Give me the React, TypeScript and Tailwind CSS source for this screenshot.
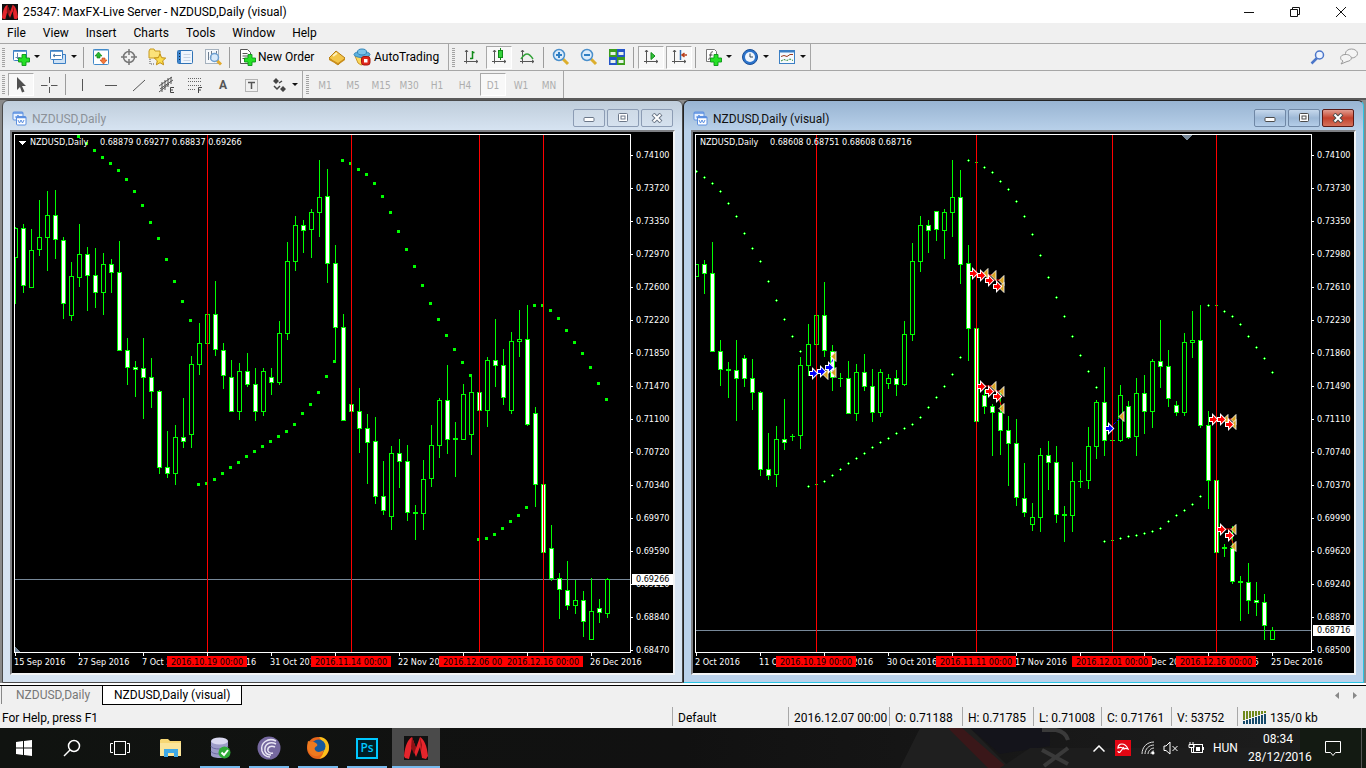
import type { ReactNode } from 'react'

// high, body top, body bottom, low, 1 = filled (bearish)
type Candle = [number, number, number, number, number]
// first x, then one y for every following bar
type Sar = [number, number[]]
type Mark = [number, number]

const BAR = 8
const TOP = 135

const LEFT_CANDLES: Candle[] = [
  [227, 228, 258, 304, 0], [224, 228, 286, 293, 1], [229, 250, 288, 288, 0], [200, 237, 250, 256, 0],
  [191, 215, 238, 271, 0], [190, 215, 240, 259, 1], [237, 240, 304, 319, 1], [262, 276, 316, 321, 0],
  [224, 254, 278, 287, 0], [247, 254, 276, 311, 1], [248, 275, 293, 308, 1], [253, 264, 293, 315, 0],
  [259, 264, 273, 293, 1], [241, 272, 351, 351, 1], [338, 350, 368, 385, 1], [361, 367, 370, 397, 1],
  [338, 368, 378, 419, 1], [358, 377, 392, 408, 1], [390, 391, 468, 474, 1], [431, 467, 474, 478, 1],
  [425, 437, 474, 485, 0], [398, 437, 442, 448, 1], [356, 364, 435, 448, 0], [323, 343, 365, 375, 0],
  [314, 314, 344, 344, 0], [281, 314, 350, 356, 1], [343, 350, 376, 389, 1], [360, 377, 412, 412, 1],
  [363, 371, 412, 420, 0], [353, 371, 385, 387, 1], [368, 384, 412, 421, 1], [368, 371, 412, 416, 0],
  [368, 377, 383, 395, 1], [321, 333, 383, 385, 0], [242, 261, 334, 340, 0], [216, 225, 262, 271, 0],
  [220, 225, 231, 253, 1], [209, 212, 230, 258, 0], [160, 197, 213, 237, 0], [169, 196, 264, 283, 1],
  [245, 263, 328, 360, 1], [314, 327, 421, 421, 1], [404, 404, 412, 412, 1], [388, 411, 429, 453, 1],
  [414, 428, 443, 484, 1], [417, 441, 497, 504, 1], [461, 496, 511, 515, 1], [446, 453, 517, 530, 0],
  [439, 453, 462, 488, 1], [445, 461, 513, 521, 1], [505, 512, 514, 540, 1], [460, 479, 514, 530, 0],
  [425, 445, 479, 487, 0], [398, 400, 446, 458, 0], [365, 400, 440, 454, 1], [422, 438, 440, 477, 1],
  [384, 394, 440, 440, 0], [376, 392, 435, 455, 0], [392, 392, 411, 411, 1], [357, 360, 411, 427, 0],
  [319, 360, 366, 387, 1], [349, 365, 398, 405, 1], [332, 341, 411, 414, 0], [310, 339, 342, 357, 0],
  [305, 339, 425, 426, 1], [407, 413, 485, 507, 1], [484, 484, 553, 553, 1], [525, 548, 579, 581, 1],
  [573, 578, 590, 619, 1], [561, 590, 606, 610, 1], [580, 600, 606, 614, 0], [591, 600, 622, 637, 1],
  [578, 611, 640, 640, 0], [599, 608, 613, 623, 1], [578, 579, 614, 618, 0],
]

const RIGHT_CANDLES: Candle[] = [
  [264, 264, 277, 277, 0], [260, 264, 274, 294, 1], [242, 273, 352, 352, 1], [340, 351, 370, 386, 1],
  [362, 369, 371, 398, 0], [340, 370, 379, 421, 1], [355, 358, 379, 387, 1], [359, 378, 393, 410, 1],
  [391, 392, 470, 476, 1], [433, 469, 476, 480, 1], [426, 439, 475, 487, 0], [399, 439, 443, 450, 1],
  [434, 436, 437, 441, 0], [357, 365, 436, 449, 0], [324, 344, 366, 376, 0], [315, 315, 345, 345, 0],
  [282, 315, 351, 357, 1], [345, 351, 378, 391, 1], [373, 378, 379, 387, 0], [361, 378, 414, 414, 1],
  [364, 372, 414, 421, 0], [354, 372, 387, 391, 1], [369, 386, 413, 422, 1], [369, 372, 413, 417, 0],
  [374, 378, 384, 389, 0], [370, 378, 385, 396, 1], [321, 334, 385, 386, 0], [243, 261, 335, 341, 0],
  [216, 225, 262, 272, 0], [220, 225, 231, 253, 1], [211, 211, 230, 241, 1], [209, 212, 231, 259, 0],
  [160, 197, 213, 237, 0], [170, 197, 265, 284, 1], [245, 263, 329, 361, 1], [328, 328, 422, 422, 1],
  [390, 395, 407, 414, 1], [404, 406, 413, 456, 1], [390, 412, 431, 455, 1], [416, 430, 444, 486, 1],
  [419, 443, 498, 506, 1], [463, 498, 513, 517, 1], [503, 517, 525, 531, 0], [448, 455, 518, 532, 0],
  [441, 455, 463, 490, 1], [446, 462, 515, 523, 1], [506, 514, 516, 542, 0], [462, 481, 516, 532, 0],
  [470, 481, 482, 488, 0], [427, 446, 481, 489, 0], [400, 402, 447, 459, 0], [367, 402, 441, 456, 1],
  [440, 440, 441, 441, 0], [385, 395, 441, 442, 0], [401, 406, 438, 439, 1], [378, 393, 437, 456, 0],
  [375, 393, 412, 434, 1], [359, 361, 412, 428, 0], [320, 361, 367, 388, 1], [350, 366, 399, 407, 1],
  [401, 405, 413, 416, 1], [333, 342, 413, 416, 0], [311, 340, 343, 358, 0], [305, 340, 426, 428, 1],
  [411, 425, 481, 509, 1], [480, 480, 553, 553, 1], [544, 547, 549, 557, 0], [526, 548, 582, 584, 1],
  [576, 581, 583, 621, 0], [563, 582, 601, 614, 1], [582, 600, 603, 616, 1], [594, 602, 626, 640, 1],
  [627, 630, 640, 640, 0],
]

const LEFT_SAR: Sar[] = [
  [63, [136, 143, 150, 157, 163, 170, 179, 191, 205, 222, 238, 259, 281, 301, 320]],
  [183, [484, 483, 479, 473, 467, 462, 456, 451, 446, 441, 436, 431, 424, 413, 404, 392, 376, 361]],
  [327, [160, 163, 169, 174, 183, 196, 212, 231, 249, 266, 285, 303, 319, 335, 349, 362, 375]],
  [463, [539, 538, 534, 528, 521, 515, 507]],
  [519, [305, 305, 310, 318, 330, 342, 353, 367, 383, 399]],
]

const RIGHT_SAR: Sar[] = [
  [0, [171, 177, 183, 191, 203, 216, 233, 248, 261, 281, 300, 319, 336, 351]],
  [112, [486, 484, 481, 475, 469, 463, 458, 453, 447, 442, 438, 433, 428, 424, 417, 407, 397, 386, 374, 357]],
  [272, [160, 162, 167, 172, 181, 189, 201, 216, 234, 255, 277, 297, 316, 336, 355, 371, 387]],
  [408, [541, 540, 538, 536, 535, 533, 531, 528, 521, 515, 510, 504, 496]],
  [512, [305, 305, 311, 316, 324, 336, 347, 358, 372]],
]

const SELLS: Mark[] = [
  [277, 273], [285, 275], [293, 280], [301, 286], [285, 386], [293, 391], [301, 396],
  [517, 419], [525, 419], [533, 424], [525, 529], [533, 535],
]
const BUYS: Mark[] = [[117, 373], [125, 371], [133, 367], [413, 428]]
const EXITS: Mark[] = [
  [290, 273], [298, 275], [306, 280], [306, 287], [298, 386], [306, 391], [306, 408],
  [138, 356], [130, 374], [138, 372], [426, 416], [530, 419], [538, 419], [538, 424], [538, 529], [538, 546],
]

const LEFT_PRICES = ['0.74100', '0.73720', '0.73350', '0.72970', '0.72600', '0.72220', '0.71850', '0.71470', '0.71100', '0.70720', '0.70340', '0.69970', '0.69590', '0.69220', '0.68840', '0.68470']
const RIGHT_PRICES = ['0.74100', '0.73730', '0.73350', '0.72980', '0.72610', '0.72230', '0.71860', '0.71490', '0.71110', '0.70740', '0.70370', '0.69990', '0.69620', '0.69240', '0.68870', '0.68500']
// an empty entry keeps its tick; the event label takes the place of the date
const LEFT_DATES = ['15 Sep 2016', '27 Sep 2016', '7 Oct 2016', '19 Oct 2016', '31 Oct 2016', '', '22 Nov 2016', '', '', '26 Dec 2016']
const RIGHT_DATES = ['2 Oct 2016', '11 Oct 2016', '20 Oct 2016', '30 Oct 2016', '', '17 Nov 2016', '', '6 Dec 2016', '15 Dec 2016', '25 Dec 2016']

function Arrow({ mark: [x, y], fill }: { mark: Mark; fill: string }) {
  return (
    <g transform={`translate(${x},${y + 0.5})`}>
      <path d="M-3-1.5H0V-4L4 0 0 4V1.5H-3z" fill="#fff" stroke="#fff" strokeWidth="2" />
      <path d="M-3-1.5H0V-4L4 0 0 4V1.5H-3z" fill={fill} />
    </g>
  )
}

interface ChartProps {
  candles: Candle[]
  sar: Sar[]
  prices: string[]
  dates: string[]
  events: { x: number; label: string }[]
  price: string
  priceY: number
  ohlc: string
  visual?: boolean
}

function Chart({ candles, sar, prices, dates, events, price, priceY, ohlc, visual }: ChartProps) {
  return (
    <div className="relative flex flex-1 overflow-hidden bg-black pt-[2px] pl-[2px] font-['DejaVu_Sans_Condensed','DejaVu_Sans',sans-serif] text-[9px] leading-[11px] text-white">
      <div className="flex min-w-0 flex-1 flex-col">
        <div className="relative min-h-0 flex-1 border border-white">
          <svg className="absolute inset-0 h-full w-full" shapeRendering="crispEdges">
            <rect x="0" y={priceY - TOP} width="100%" height="1" fill="#778899" />
            <g transform={`translate(0,${-TOP})`}>
              {candles.map(([high, top, bottom, low, filled], i) => (
                <g key={i}>
                  <rect x={i * BAR} y={high} width="1" height={Math.max(low - high, 1)} fill="#00ff00" />
                  <rect x={i * BAR - 2} y={top} width="5" height={bottom - top} fill="#00ff00" />
                  {bottom - top > 2 && (
                    <rect x={i * BAR - 1} y={top + 1} width="3" height={bottom - top - 2} fill={filled ? '#fff' : '#000'} />
                  )}
                </g>
              ))}
              {sar.map(([x, ys]) => ys.map((y, i) => visual ? (
                <g key={`${x}-${i}`} fill="#00ff00">
                  <rect x={x + i * BAR - 1} y={y} width="3" height="1" />
                  <rect x={x + i * BAR} y={y - 1} width="1" height="3" />
                  <rect x={x + i * BAR} y={y} width="1" height="1" fill="#c8ffc8" />
                </g>
              ) : (
                <rect key={`${x}-${i}`} x={x + i * BAR - 1} y={y - 1} width="3" height="3" fill="#00ff00" />
              )))}
            </g>
            {events.map((e) => <rect key={e.x} x={e.x} y="0" width="1" height="100%" fill="#f00" />)}
            {visual ? <path d="M485 0h11l-5 5h-1z" fill="#778899" /> : (
              <>
                <path d="M3 6h8l-4 4z" fill="#fff" />
                <path d="M0 512v5h5z" fill="#778899" />
              </>
            )}
            {visual && (
              <g transform={`translate(0,${-TOP})`} shapeRendering="auto">
                <path d="M286 275h12M294 280h12M286 386h12M294 391h12M302 396l4 12M518 419h20M526 529h12M534 535l4 11" stroke="#f00" />
                <path d="M118 373h12M126 371h12M134 367l4-11M414 428l12-12" stroke="#00f" strokeDasharray="3 2" />
                {EXITS.map(([x, y], i) => (
                  <path key={i} d="M-3 0L2-5V5z" transform={`translate(${x},${y + 0.5})`} fill="#daa520" stroke="#fff" strokeWidth="0.8" />
                ))}
                {SELLS.map((m, i) => <Arrow key={i} mark={m} fill="#f00" />)}
                {BUYS.map((m, i) => <Arrow key={i} mark={m} fill="#00f" />)}
              </g>
            )}
          </svg>
          <div className={`absolute top-[2px] flex whitespace-pre ${visual ? 'left-[4px]' : 'left-[15px]'}`}>
            <span className="w-[70px]">NZDUSD,Daily</span>
            <span>{ohlc}</span>
          </div>
        </div>
        <div className="relative h-[20px]">
          {dates.map((d, i) => (
            <span key={i} className="absolute top-0 border-l border-white whitespace-nowrap" style={{ left: 1 + i * 64, height: 3 }}>
              {d && <span className="absolute top-[4px] -left-[2px]">{d}</span>}
            </span>
          ))}
          {events.map((e) => (
            <span key={e.x} className="absolute top-[3px] h-[11px] w-[80px] bg-[#f00] text-center leading-[13px] text-black" style={{ left: e.x - 39 }}>
              {e.label}
            </span>
          ))}
        </div>
      </div>
      <div className="w-[42px] pt-[5px]">
        {prices.map((p) => (
          <div key={p} className="flex h-[33px] items-center gap-[3px]">
            <span className="h-px w-[2px] bg-white" />
            {p}
          </div>
        ))}
      </div>
      <span className="absolute right-0 w-[41px] bg-white pl-[4px] text-black" style={{ top: priceY - 137 }}>{price}</span>
    </div>
  )
}

function MdiIcon() {
  return (
    <svg width="15" height="15" viewBox="0 0 15 15" fill="none" stroke="#5b8fe0">
      <rect x="1" y="1" width="10" height="8" rx="1" fill="#e8f2ff" />
      <path d="M1 2h10" strokeWidth="1.500" />
      <path d="M3 6h2l1-2 1 3" />
      <rect x="4.500" y="5.500" width="9.500" height="8.500" rx="1" fill="#fff" />
      <path d="M4 6.500h10" strokeWidth="1.500" />
      <path d="M6 9l1.500 3L9 9l1.500 3L12 9" />
    </svg>
  )
}

function ChartWindow({ title, active, children }: { title: string; active?: boolean; children: ReactNode }) {
  const btn = active
    ? 'border-[#6f87a5] bg-gradient-to-b from-[#c6d8ec] via-[#9db8d6] to-[#b4cde8]'
    : 'border-[#8c9cb4] bg-gradient-to-b from-[#cedae6] to-[#d5e1ee]'
  const last = active ? 'border-[#5b1a16] bg-gradient-to-b from-[#e19b8f] via-[#c3402c] to-[#d3705a]' : btn
  const edge = active ? '#4b4b4b' : '#6b7788'
  return (
    <section
      className={`flex min-w-0 flex-1 flex-col rounded-t-md border px-[7px] pb-[7px] ${active
        ? 'border-[#222] border-r-[#2cc4e4] border-b-[#2cc4e4] bg-[#b9d1ea] bg-gradient-to-b from-[#98b4d2] to-[#b9d1ea] to-[30px]'
        : 'border-[#4a4a4a] bg-[#d7e4f2] bg-gradient-to-b from-[#bfcddb] to-[#d7e4f2] to-[30px]'}`}
    >
      <header className="flex h-[29px] items-center pt-[5px] pl-[2px]">
        <MdiIcon />
        <h2 className={`ml-[5px] flex-1 pt-[2px] text-[12px] ${active ? 'text-[#111]' : 'text-[#8c9299]'}`}>{title}</h2>
        <div className="flex gap-[2px] pr-[2px]">
          <button aria-label="Minimize" className={`flex h-[18px] w-[32px] items-center justify-center rounded-[2px] border ${btn}`}>
            <svg width="12" height="10"><rect x="1" y="4.500" width="10" height="4" rx="1" fill="#fff" stroke={edge} /></svg>
          </button>
          <button aria-label="Restore" className={`flex h-[18px] w-[32px] items-center justify-center rounded-[2px] border ${btn}`}>
            <svg width="12" height="10"><rect x="1.500" y="0.500" width="9" height="8" rx="1" fill="#fff" stroke={edge} /><rect x="4" y="3" width="4" height="3" fill="none" stroke={edge} /></svg>
          </button>
          <button aria-label="Close" className={`flex h-[18px] w-[32px] items-center justify-center rounded-[2px] border ${last}`}>
            <svg width="12" height="10"><path d="M2 1l8 8M10 1L2 9" stroke={edge} strokeWidth="4" /><path d="M2.500 1.500l7 7M9.500 1.500l-7 7" stroke="#fff" strokeWidth="2" /></svg>
          </button>
        </div>
      </header>
      <div className="flex min-h-0 flex-1 border-2 border-[#7d7f83] border-r-[#f2f4f6] border-b-[#f2f4f6]">{children}</div>
    </section>
  )
}

const Grip = () => <span className="mx-[2px] h-[19px] w-[3px] bg-[repeating-linear-gradient(#a2a2a2_0_1px,#f0f0f0_1px_2px)]" />
const Sep = () => <span className="mr-[3px] ml-[2px] h-[21px] w-px bg-[#9c9c9c]" />
const Caret = () => <svg width="6" height="4"><path d="M0 0h6L3 3z" fill="#111" /></svg>

function Tool({ label, on, wide, children }: { label: string; on?: boolean; wide?: boolean; children: ReactNode }) {
  return (
    <button
      aria-label={label}
      className={`flex h-[23px] items-center justify-center gap-[4px] ${wide ? 'w-[37px]' : on ? 'mx-px w-[26px]' : 'w-[28px]'} ${on ? 'border border-[#a8a8a8] border-r-white border-b-white bg-[#f8f8f8]' : ''}`}
    >
      {children}
    </button>
  )
}

const Ico = ({ children }: { children: ReactNode }) => (
  <svg width="18" height="18" viewBox="0 0 18 18" fill="none" className="shrink-0">{children}</svg>
)

const plus = <path d="M10 6.500h4v3.500h3.500v4H14v3.500h-4V14H6.500v-4H10z" fill="#25e025" stroke="#0a9416" strokeWidth=".9" />
const axes = <path d="M4.500 2v13.500M2 13.500h14M3 4l1.500-2L6 4M14 12l2 1.500-2 1.500" stroke="#555" />

function LogoM({ size }: { size: number }) {
  return (
    <svg width={size} height={size} viewBox="0 0 24 24">
      <rect width="24" height="24" fill="#111" />
      <path d="M0 20C1 10 4 3 8 1l4 11 4-11c4 2 7 9 8 19l-2 3-4-1-2-11-4 10-4-10-3 12-4-1z" fill="#e5252c" />
      <path d="M8 1l4 11-2 6-3-7zM16 1l2 8-1 6z" fill="#8c1115" />
    </svg>
  )
}

function MainToolbar() {
  return (
    <div className="flex h-[27px] items-center border-b border-[#a6a6a6]">
      <div className="flex h-full items-center border-r border-[#a6a6a6]">
        <Grip />
        <Tool label="New chart" wide>
          <Ico><rect x="1.500" y="2.500" width="13" height="10" rx="1" fill="#fff" stroke="#3b7fc4" /><path d="M1 3h14" stroke="#3b7fc4" strokeWidth="1.500" /><path d="M5.500 5v6M3.500 9.500h5" stroke="#6b8cae" />{plus}</Ico>
          <Caret />
        </Tool>
        <Tool label="Profiles" wide>
          <Ico><path d="M4.500 9v6.500h12V6.500h-3" fill="#cfe2f5" stroke="#3b7fc4" /><rect x="1.500" y="2.500" width="12" height="9" rx="1" fill="#fff" stroke="#3b7fc4" /><path d="M1 3h13" stroke="#3b7fc4" strokeWidth="1.500" /><path d="M4 7.500h8M6 6l-2 1.500L6 9" stroke="#4c79a8" /></Ico>
          <Caret />
        </Tool>
        <Sep />
        <Tool label="Market Watch">
          <Ico><rect x="1.500" y="1.500" width="15" height="15" rx="1" fill="#fff" stroke="#4189c9" /><path d="M1 2h16" stroke="#4189c9" /><path d="M3 8l3.500-4L10 8H8v2H5V8z" fill="#29b82f" stroke="#0b7a14" strokeWidth=".6" /><path d="M8 12l3.500 4 3.500-4h-2v-2h-3v2z" fill="#f47b3c" stroke="#c3400e" strokeWidth=".6" /></Ico>
        </Tool>
        <Tool label="Data Window">
          <Ico><circle cx="9" cy="9" r="5.500" stroke="#777" strokeWidth="1.500" /><path d="M9 1v6M9 11v6M1 9h6M11 9h6" stroke="#777" strokeWidth="1.500" /></Ico>
        </Tool>
        <Tool label="Navigator">
          <Ico><path d="M1 3l1-2h4l1 2h5v7H1z" fill="#fbe27a" stroke="#c79a1e" /><path d="M2 11v5h4" stroke="#555" strokeDasharray="1 1" /><path d="M12 6l1.700 3.700 4 .4-3 2.700.9 4L12 14.700l-3.600 2.100.9-4-3-2.700 4-.4z" fill="#fbdc4c" stroke="#c18e10" /></Ico>
        </Tool>
        <Tool label="Terminal">
          <Ico><rect x="1.500" y="2.500" width="15" height="13" rx="1" fill="#eef5fd" stroke="#2f72b5" /><rect x="2" y="3" width="3" height="12" fill="#3f86cf" /><path d="M3 5.500h1M3 8.500h1M3 11.500h1" stroke="#123" /><path d="M7.500 6.500h7M7.500 9.500h7M7.500 12.500h7" stroke="#c7d3e2" /></Ico>
        </Tool>
        <Tool label="Strategy Tester">
          <Ico><rect x="1.500" y="1.500" width="13" height="14" fill="#f5f8fb" stroke="#a5b1bd" /><path d="M4.500 4v8M7.500 3v7M12.500 3v4" stroke="#6c7c8e" /><path d="M13 12.500l4 4" stroke="#e2a92c" strokeWidth="3" /><circle cx="10.500" cy="9.500" r="4" fill="#cfe5fa" fillOpacity=".8" stroke="#6d9fd0" strokeWidth="1.500" /></Ico>
        </Tool>
        <Sep />
        <button className="flex h-[23px] w-[90px] items-center gap-[2px] pl-[5px] text-[12px] whitespace-nowrap">
          <Ico><path d="M2.500 1.500h7l3 3v11h-10z" fill="#fff" stroke="#555" /><path d="M4.500 5.500h5M4.500 8h6M4.500 10.500h4" stroke="#555" />{plus}</Ico>
          New Order
        </button>
        <Tool label="MetaEditor">
          <Ico><path d="M1 10l7-7 9 7-7 7z" fill="#f3c64a" stroke="#b47a12" /><path d="M1 10l9 5 7-5v2l-7 5-9-5z" fill="#c98e1c" /><path d="M5 8l4-3" stroke="#fdf0b8" strokeWidth="2" /></Ico>
        </Tool>
        <button className="flex h-[23px] w-[97px] items-center gap-[3px] pl-[2px] text-[12px] whitespace-nowrap">
          <Ico><path d="M2 8h14l-4 8-4 1-3-2z" fill="#fbd75c" stroke="#c9972a" /><ellipse cx="9" cy="6.500" rx="8" ry="3" fill="#5db1df" stroke="#3386b8" /><ellipse cx="9" cy="4" rx="4.500" ry="3" fill="#7cc4ea" stroke="#3386b8" /><rect x="8.500" y="8.500" width="8.500" height="8.500" rx="2.500" fill="#e0281c" stroke="#a5140c" /><rect x="11" y="11" width="3.500" height="3.500" fill="#fff" /></Ico>
          AutoTrading
        </button>
      </div>
      <div className="flex h-full items-center border-r border-[#a6a6a6] pl-px">
        <Grip />
        <Tool label="Bar Chart"><Ico>{axes}<path d="M10.500 3v8M10.500 4.500h2M8 10.500h2.500" stroke="#118a18" strokeWidth="1.500" /></Ico></Tool>
        <Tool label="Candlesticks" on><Ico>{axes}<path d="M10.500 0v12" stroke="#118a18" /><rect x="8.500" y="2.500" width="4" height="7" fill="#34d23b" stroke="#118a18" /></Ico></Tool>
        <Tool label="Line Chart"><Ico>{axes}<path d="M3 11c2-3 4-5 6-5s4 2 6 5" stroke="#32a238" strokeWidth="1.500" /></Ico></Tool>
        <Sep />
        <Tool label="Zoom In"><Ico><path d="M11 11l5 5" stroke="#dcae2c" strokeWidth="3" /><circle cx="7" cy="7" r="5.500" fill="#dcecfb" stroke="#4a8fcb" strokeWidth="1.500" /><path d="M7 4v6M4 7h6" stroke="#2f7fc4" strokeWidth="2" /></Ico></Tool>
        <Tool label="Zoom Out"><Ico><path d="M11 11l5 5" stroke="#dcae2c" strokeWidth="3" /><circle cx="7" cy="7" r="5.500" fill="#dcecfb" stroke="#4a8fcb" strokeWidth="1.500" /><path d="M4 7h6" stroke="#2f7fc4" strokeWidth="2" /></Ico></Tool>
        <Tool label="Tile Windows"><Ico>
          <rect x="1" y="1" width="8" height="8" fill="#3b9d1e" /><rect x="9" y="1" width="8" height="8" fill="#2455c8" />
          <rect x="1" y="9" width="8" height="8" fill="#2455c8" /><rect x="9" y="9" width="8" height="8" fill="#3b9d1e" />
          <path d="M2.500 5.500h5M10.500 5.500h5M2.500 13.500h5M10.500 13.500h5" stroke="#e8f1e8" strokeWidth="3" />
        </Ico></Tool>
        <Sep />
        <Tool label="Auto Scroll" on><Ico>{axes}<path d="M9 4.500l4 3.500-4 3.500z" fill="#2fc437" stroke="#118a18" /></Ico></Tool>
        <Tool label="Chart Shift" on><Ico>{axes}<path d="M10.500 2v10" stroke="#2f6db5" strokeWidth="1.500" /><path d="M17 7h-4M14.500 5l-2.500 2 2.500 2" stroke="#b8401c" strokeWidth="1.500" /></Ico></Tool>
        <Sep />
        <Tool label="Indicators" wide><Ico><path d="M2.500 1.500h8l2 2v10h-10z" fill="#fff" stroke="#777" /><path d="M9 4c-2-1-2 1-2.500 3.500S6 12 4 11M5 7h3.500" stroke="#444" />{plus}</Ico><Caret /></Tool>
        <Tool label="Periods" wide><Ico><circle cx="9" cy="9" r="7.500" fill="#2c74cc" stroke="#1a4f97" /><circle cx="9" cy="9" r="5" fill="#f0f6fd" /><path d="M9 5.500V9h3" stroke="#345" /></Ico><Caret /></Tool>
        <Tool label="Templates" wide><Ico><rect x="1.500" y="2.500" width="15" height="13" fill="#f7fafd" stroke="#3b7fc4" /><path d="M1 3.500h16" stroke="#3b7fc4" strokeWidth="2" /><path d="M3 8.500l3-1 3 1 3-2 3 0" stroke="#9c3a1e" /><path d="M3 13l3-1.500 3 1 3-1.500 3 1.500" stroke="#2d8a35" strokeDasharray="2 1" /></Ico><Caret /></Tool>
      </div>
      <div className="ml-auto flex items-center gap-[13px] pr-[7px]">
        <button aria-label="Search">
          <svg width="16" height="16" fill="none" stroke="#4b76c9"><path d="M1.500 14.500L7 9" strokeWidth="2.500" /><circle cx="9.500" cy="6" r="4" fill="#eef4ff" strokeWidth="1.500" /></svg>
        </button>
        <button aria-label="Chat">
          <svg width="20" height="18" fill="#f4f4f4" stroke="#999"><ellipse cx="12.500" cy="5.500" rx="6" ry="4.500" /><path d="M2 16l2-3c-3-1-4-6 2-6.500 7-.5 9 6 2 7z" /></svg>
        </button>
      </div>
    </div>
  )
}

function LineToolbar() {
  return (
    <div className="flex h-[27px] items-center">
      <div className="flex h-full items-center border-r border-[#a6a6a6]">
        <Grip />
        <Tool label="Cursor" on><Ico><path d="M5 1v13l3-3 2 5.500 2.500-1L10 10h4z" fill="#505050" /></Ico></Tool>
        <Tool label="Crosshair"><Ico><path d="M9.500 1v6M9.500 11v6M1 9.500h6.500M11 9.500h6.500" stroke="#555" /></Ico></Tool>
        <Sep />
        <Tool label="Vertical Line"><Ico><path d="M8.500 3v12" stroke="#555" /></Ico></Tool>
        <Tool label="Horizontal Line"><Ico><path d="M3 9.500h12" stroke="#555" /></Ico></Tool>
        <Tool label="Trendline"><Ico><path d="M3 15L15 4" stroke="#555" /></Ico></Tool>
        <Tool label="Equidistant Channel"><Ico><path d="M1 10L14 1M1 16L11 8M4 6v10M7 4v10M10 2v9M13 1v7M2 13L15 4" stroke="#555" /><path d="M16 11.500h-3.500v5H16M12.500 14H15" stroke="#444" /></Ico></Tool>
        <Tool label="Fibonacci"><Ico><path d="M2 2.500h14M2 5.500h14M2 9.500h14M2 13.500h8" stroke="#666" strokeDasharray="1 1" /><path d="M16 11.500h-3.500V17M12.500 14H15" stroke="#444" /></Ico></Tool>
        <Tool label="Text"><span className="text-[12px] font-bold text-[#555]">A</span></Tool>
        <Tool label="Text Label"><Ico><rect x="3.500" y="3.500" width="12" height="12" stroke="#777" strokeDasharray="1 1" /><path d="M6 6.500h7M9.500 6v7" stroke="#555" strokeWidth="1.500" /></Ico></Tool>
        <Tool label="Arrows" wide><Ico><path d="M3 5l3-3 3 3-3 3zM10 13l3-3 3 3-3 3z" fill="#444" /><path d="M4 10l3 3 3-3M9 7l3-2" stroke="#444" strokeWidth="1.500" /></Ico><Caret /></Tool>
      </div>
      <div className="flex h-full items-center border-r border-[#a6a6a6] pl-px">
        <Grip />
        {['M1', 'M5', 'M15', 'M30', 'H1', 'H4', 'D1', 'W1', 'MN'].map((p) => (
          <Tool key={p} label={p} on={p === 'D1'}>
            <span className="pt-px font-['DejaVu_Sans_Condensed','DejaVu_Sans',sans-serif] text-[10px] text-[#adadad]">{p}</span>
          </Tool>
        ))}
      </div>
    </div>
  )
}

function StatusBar() {
  const cell = 'flex h-[19px] items-center border-l border-[#a8a8a8] pl-[5px] pt-[2px]'
  return (
    <footer className="flex h-[23px] items-center bg-[#f0f0f0] text-[12px] whitespace-nowrap">
      <span className="flex-1 pt-[2px] pl-[2px]">For Help, press F1</span>
      <span className={`${cell} w-[116px]`}>Default</span>
      <span className={`${cell} w-[101px]`}>2016.12.07 00:00</span>
      <span className={`${cell} w-[73px]`}>O: 0.71188</span>
      <span className={`${cell} w-[71px]`}>H: 0.71785</span>
      <span className={`${cell} w-[68px]`}>L: 0.71008</span>
      <span className={`${cell} w-[70px]`}>C: 0.71761</span>
      <span className={`${cell} w-[66px]`}>V: 53752</span>
      <span className={`${cell} w-[129px] gap-[4px]`}>
        <svg width="23" height="13">
          {[0, 1, 2, 3, 4, 5, 6, 7].map((i) => (
            <g key={i}>
              <rect x={i * 3} y="0" width="2" height={9 - i} fill="#6f8a1c" />
              <rect x={i * 3} y={10 - i} width="2" height={3 + i} fill="#164a6b" />
            </g>
          ))}
        </svg>
        135/0 kb
      </span>
    </footer>
  )
}

function TaskButton({ label, open, active, children }: { label: string; open?: boolean; active?: boolean; children: ReactNode }) {
  return (
    <button aria-label={label} className={`relative flex h-[40px] w-[48px] items-center justify-center ${active ? 'bg-[#4a4a4a]' : ''}`}>
      {children}
      {(open || active) && <span className={`absolute bottom-0 h-[2px] bg-[#76b9ed] ${active ? 'w-[48px]' : 'w-[40px]'}`} />}
    </button>
  )
}

function Taskbar() {
  return (
    <nav className="relative flex h-[40px] items-center bg-gradient-to-r from-[#101310] via-[#111] to-[#1e1e1e] text-white">
      {/* wallpaper showing through the bar */}
      <svg className="absolute top-0 right-0" width="466" height="40">
        <path d="M20 0h50l40 40H0z" fill="#1f1f1f" />
        <path d="M48 0l14 0 46 40h-20z" fill="#3a1719" />
        <path d="M70 0h80v18l-50 8z" fill="#14141b" />
        <path d="M100 40l30-20h250v20z" fill="#1d1d1d" />
        <path d="M142 2h14q10 2 12 10M142 22l26 14M168 20l-24 18" fill="none" stroke="#3a3a3a" strokeWidth="4" />
        <rect x="400" width="66" height="40" fill="#131a12" />
        <path d="M461.500 0v40" stroke="#555" />
      </svg>
      <TaskButton label="Start"><svg width="16" height="16" fill="#fff"><path d="M0 2l7-1v6.500H0zM8 1l8-1v7.500H8zM0 8.500h7V15l-7-1zM8 8.500h8V16l-8-1z" /></svg></TaskButton>
      <TaskButton label="Search"><svg width="18" height="18" fill="none" stroke="#fff" strokeWidth="1.500"><circle cx="11" cy="7" r="5.500" /><path d="M7 11l-6 6" /></svg></TaskButton>
      <TaskButton label="Task View"><svg width="20" height="16" fill="none" stroke="#fff"><rect x="4.500" y="1.500" width="11" height="13" /><path d="M3 3.500H.5v9H3M17 3.500h2.500v9H17" /></svg></TaskButton>
      <div className="mr-px ml-[3px] flex gap-px">
        <TaskButton label="File Explorer"><svg width="22" height="20"><path d="M0 2l1-1h7l2 2h11v15H0z" fill="#f7d774" /><path d="M0 5h21v13H0z" fill="#fbe59a" /><path d="M4 19v-8h14v8h-4v-4H8v4z" fill="#3fa9e6" /></svg></TaskButton>
        <TaskButton label="Database" open><svg width="21" height="22"><path d="M1 4v14c0 4 17 4 17 0V4z" fill="#9d9cc8" /><ellipse cx="9.500" cy="4" rx="8.500" ry="3.500" fill="#d9d8ef" /><path d="M1 9c0 4 17 4 17 0M1 14c0 4 17 4 17 0" fill="none" stroke="#6e6da3" /><circle cx="14.500" cy="15.500" r="6" fill="#2faa37" /><path d="M11.500 15.500l2.500 2.500 4-5" fill="none" stroke="#fff" strokeWidth="2" /></svg></TaskButton>
        <TaskButton label="BitTorrent" open><svg width="24" height="24" fill="none" stroke="#e9e6f4" strokeWidth="1.500"><circle cx="12" cy="12" r="11.500" fill="#75689f" stroke="none" /><path d="M19 5C11 1 3 7 5 15c1 3 4 6 8 6M19 8c-6-3-12 0-11 7 1 3 3 4 6 4M18 11c-4-2-8 0-7 4 1 2 2 3 5 2" /></svg></TaskButton>
        <TaskButton label="Firefox" open><svg width="24" height="24"><circle cx="12" cy="12" r="11" fill="#e8661b" /><path d="M13 1c8 0 12 8 9 15-2 4-5 6-9 7 6-5 7-14 0-22z" fill="#fcc21b" /><circle cx="12.500" cy="10.500" r="7" fill="#17599c" /><path d="M2 5c2 1 4 1 6 1 3 1 4 3 3 4-2 1-3 2-2 4 2 3 6 2 9 0-2 6-9 8-13 4C1 15 1 9 2 5z" fill="#ee7a1f" /></svg></TaskButton>
        <TaskButton label="Photoshop" open><span className="flex h-[21px] w-[22px] items-center justify-center border-2 border-[#00c8ff] bg-[#001d26] font-['Open_Sans',sans-serif] text-[12px] leading-none font-semibold text-[#00c8ff]">Ps</span></TaskButton>
      </div>
      <TaskButton label="MetaTrader" active><LogoM size={24} /></TaskButton>
      <div className="relative ml-auto flex h-full items-center">
        <svg width="12" height="7" fill="none" stroke="#fff" strokeWidth="1.500" className="mr-[10px]"><path d="M.5 6.500L6 1l5.500 5.500" /></svg>
        <svg width="16" height="16" fill="none" stroke="#fff" className="mr-[10px]"><rect width="16" height="16" fill="#e30613" stroke="none" /><path d="M3 8c0-5 7-6 10 1-2-1-3-1-4 0-2-2-4-2-6-1zM9 7l-4 5c-1 1-2 0-2-1" strokeWidth="1.200" /></svg>
        <svg width="14" height="14" fill="none" stroke="#ddd" className="mr-[8px]"><path d="M1 13C1 6 6 1 13 1M4 13c0-5 4-9 9-9M7 13c0-3 3-6 6-6M10 13c0-2 1-3 3-3" /><circle cx="12" cy="12" r="1.500" fill="#fff" stroke="none" /></svg>
        <svg width="16" height="14" fill="none" stroke="#fff" className="mr-[9px]"><path d="M1 5h2l4-4v12L3 9.500H1zM9.500 5l5 5M14.500 5l-5 5" /></svg>
        <svg width="17" height="12" fill="none" stroke="#fff" className="mr-[8px]"><rect x="5.500" y="2.500" width="9" height="8" /><path d="M15.500 5v3M2 0v2M5 0v2M1 2.500h5v3H1zM3.500 6v4.500h2" /><rect x="8" y="5" width="4" height="4" fill="#fff" stroke="none" /></svg>
        <span className="w-[35px] text-[12px]">HUN</span>
        <time className="w-[60px] text-center text-[12px] leading-[18px]">08:34<br />28/12/2016</time>
        <button aria-label="Notifications" className="mr-[24px] ml-[17px]">
          <svg width="17" height="17" fill="none" stroke="#fff"><path d="M.5 1.500h15v11h-5l-2.500 3-2.500-3h-5z" /></svg>
        </button>
      </div>
    </nav>
  )
}

export default function App() {
  return (
    <div className="flex min-h-screen flex-col bg-[#f0f0f0] font-[Roboto,'Open_Sans',sans-serif] text-black">
      <header className="flex h-[23px] items-center bg-white pl-[2px] text-[12px]">
        <LogoM size={16} />
        <h1 className="ml-[5px] flex-1">25347: MaxFX-Live Server - NZDUSD,Daily (visual)</h1>
        <div className="flex items-center gap-[36px] pr-[20px]">
          <button aria-label="Minimize"><svg width="10" height="10"><path d="M0 5.500h10" stroke="#111" /></svg></button>
          <button aria-label="Restore"><svg width="10" height="10" fill="none" stroke="#111"><path d="M.5 2.500h7v7h-7zM2.500 2V.5h7v7H8" /></svg></button>
          <button aria-label="Close"><svg width="10" height="10"><path d="M0 0l10 10M10 0L0 10" stroke="#111" /></svg></button>
        </div>
      </header>
      <nav className="flex h-[21px] items-center gap-[17px] border-b border-[#a6a6a6] pl-[7px] text-[12px]">
        {['File', 'View', 'Insert', 'Charts', 'Tools', 'Window', 'Help'].map((m) => <button key={m}>{m}</button>)}
      </nav>
      <MainToolbar />
      <LineToolbar />
      <main className="flex min-h-[580px] flex-1 border-t-2 border-b-2 border-t-[#5a5a5a] border-b-white bg-[#8a8a8a] px-[2px]">
        <ChartWindow title="NZDUSD,Daily">
          <Chart
            candles={LEFT_CANDLES}
            sar={LEFT_SAR}
            prices={LEFT_PRICES}
            dates={LEFT_DATES}
            events={[
              { x: 192, label: '2016.10.19 00:00' },
              { x: 336, label: '2016.11.14 00:00' },
              { x: 464, label: '2016.12.06 00:00' },
              { x: 528, label: '2016.12.16 00:00' },
            ]}
            price="0.69266"
            priceY={579}
            ohlc="0.68879 0.69277 0.68837 0.69266"
          />
        </ChartWindow>
        <ChartWindow title="NZDUSD,Daily (visual)" active>
          <Chart
            visual
            candles={RIGHT_CANDLES}
            sar={RIGHT_SAR}
            prices={RIGHT_PRICES}
            dates={RIGHT_DATES}
            events={[
              { x: 120, label: '2016.10.19 00:00' },
              { x: 280, label: '2016.11.11 00:00' },
              { x: 416, label: '2016.12.01 00:00' },
              { x: 520, label: '2016.12.16 00:00' },
            ]}
            price="0.68716"
            priceY={630}
            ohlc="0.68608 0.68751 0.68608 0.68716"
          />
        </ChartWindow>
      </main>
      <div className="flex h-[20px] border-t border-black pl-px text-[12px]">
        <button className="h-[18px] w-[101px] border-l border-[#888] pl-[14px] text-left leading-[17px] text-[#777]">NZDUSD,Daily</button>
        <button className="h-[19px] w-[140px] border-x border-b border-black bg-white pl-[11px] text-left leading-[17px]">NZDUSD,Daily (visual)</button>
        <div className="ml-auto flex items-center gap-[14px] pr-[9px]">
          <button aria-label="Previous tab"><svg width="4" height="7"><path d="M4 0v7L0 3.500z" fill="#888" /></svg></button>
          <button aria-label="Next tab"><svg width="4" height="7"><path d="M0 0v7l4-3.500z" fill="#888" /></svg></button>
        </div>
      </div>
      <StatusBar />
      <Taskbar />
    </div>
  )
}
